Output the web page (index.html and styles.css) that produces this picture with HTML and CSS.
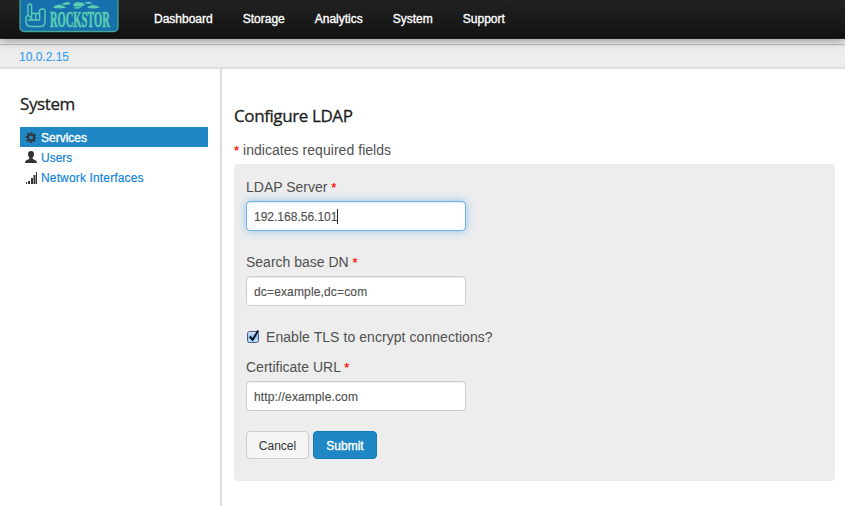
FILE: index.html
```html
<!DOCTYPE html>
<html lang="en">
<head>
<meta charset="utf-8">
<title>Configure LDAP</title>
<link rel="stylesheet" href="styles.css">
</head>
<body>
<header class="navbar">
  <svg class="logo" width="100" height="38" viewBox="0 0 100 38">
    <rect x="1" y="-3.5" width="98" height="35" rx="4" fill="#1770ab" stroke="#45a596" stroke-width="1.3"/>
    <g fill="none" stroke="#5bcdb4" stroke-width="1.400" stroke-linejoin="round" stroke-linecap="round">
      <path d="M9 15.500V6q0-2 1.800-2t1.800 2V14M12.600 20v-5q0-1.800 2-1.800t2 1.800v5h-3.500M16.600 15q0-1.800 2-1.800t2 1.800v5h-3.500M20.600 15V11q0-2 2.700-2t2.700 2v11q0 4.500-5 4.500h-9Q7 26.500 7 22v-4q0-3 3-2l4 4H9.500"/>
    </g>
    <g fill="#5bcdb4">
      <path d="M34 7l4-2 3-.5 4 1.500 2 1.500-5 1-7-.5zM43 3.500l5-1.500 4 1-2 1.500-5 .5zM54 4l4-2 6 .8 2 2-4 2-7-.5zM53 8l5-1 5 .5-4 1.200zM65 2.500l5-.8 4 1.300-5 1zM68 7l5-2 4 .5 4 2-5 1-6-.2z"/>
    </g>
    <text class="logo-text" transform="translate(31 27) scale(.437 1)">ROCKSTOR</text>
  </svg>
  <nav class="menu"><a>Dashboard</a><a>Storage</a><a>Analytics</a><a>System</a><a>Support</a></nav>
</header>
<div class="hostbar"><a>10.0.2.15</a></div>
<div class="layout">
  <aside class="sidebar">
    <h4 class="title">System</h4>
    <ul class="side-nav">
      <li class="active">
        <svg width="14" height="14" viewBox="0 0 14 14"><g fill="none" stroke="#333"><circle cx="7" cy="7.500" r="3.100" stroke-width="2"/><circle cx="7" cy="7.500" r="4.700" stroke-width="1.600" stroke-dasharray="1.891 1.800" stroke-dashoffset=".94"/></g></svg>
        <a>Services</a></li>
      <li>
        <svg width="14" height="14" viewBox="0 0 14 14"><path fill="#333" d="M7 1c2 0 3 1.200 3 3 0 1.500-.5 2.700-1.300 3.500v1.300c.6.900 4.300 1.200 4.300 4.200H1c0-3 3.700-3.300 4.300-4.200V7.500C4.500 6.700 4 5.500 4 4c0-1.800 1-3 3-3z"/></svg>
        <a>Users</a></li>
      <li>
        <svg width="14" height="14" viewBox="0 0 14 14"><path fill="#333" d="M2 12h1v2H2zM4 11h2v3H4zM7 8h2v6H7zM9.500 5h2v9h-2zM12 2h1v12h-1z"/></svg>
        <a class="wide">Network Interfaces</a></li>
    </ul>
  </aside>
  <main class="content">
    <h4 class="title">Configure LDAP</h4>
    <p class="hint"><span class="required">*</span> indicates required fields</p>
    <form class="well">
      <label class="label">LDAP Server <span class="required">*</span></label>
      <div class="field focused">192.168.56.101<span class="caret"></span></div>
      <label class="label">Search base DN <span class="required">*</span></label>
      <div class="field wide">dc=example,dc=com</div>
      <div class="check">
        <svg width="14" height="16" viewBox="0 0 14 16"><defs><linearGradient id="box" x2="0" y2="1"><stop stop-color="#e2effa"/><stop offset=".45" stop-color="#94c3ee"/><stop offset="1" stop-color="#c3edfb"/></linearGradient></defs><rect x="1.500" y="2.500" width="11" height="11" rx="2" fill="url(#box)" stroke="#49548b"/><path d="M3.800 7.500l2.900 3.300L12.200 1.500" fill="none" stroke="#0b1020" stroke-width="2"/></svg>
        <span>Enable TLS to encrypt connections?</span>
      </div>
      <label class="label">Certificate URL <span class="required">*</span></label>
      <div class="field wide last">http://example.com</div>
      <div class="actions"><button type="button" class="btn">Cancel</button><button type="button" class="btn primary">Submit</button></div>
    </form>
  </main>
</div>
</body>
</html>
```
FILE: styles.css
```css
* { box-sizing: border-box; }
body {
  margin: 0;
  height: 506px;
  overflow: hidden;
  background: #fff;
  color: #505050;
  font: 14px/20px "Liberation Sans", sans-serif;
}
.navbar {
  position: relative;
  display: flex;
  height: 39px;
  padding-left: 19px;
  background: linear-gradient(#222, #111);
  border-bottom: 1px solid #201c1c;
  box-shadow: 0 1px 10px rgba(0, 0, 0, .45);
}
.logo { flex: none; overflow: visible; }
.logo-text {
  font: bold 24px "Liberation Serif", serif;
  fill: #5bcdb4;
  stroke: #5bcdb4;
  stroke-width: .7px;
}
.menu {
  display: flex;
  gap: 30px;
  margin-left: 35px;
  padding-top: 9px;
  color: #fff;
  font-size: 12px;
  -webkit-text-stroke: .35px #fff;
}
.hostbar {
  height: 30px;
  padding: 8px 19px 0;
  background: linear-gradient(transparent 5px, #c2c2c2 5px, #c2c2c2 6px, transparent 6px), #ededed;
  border-bottom: 2px solid #ddd;
  color: #33a0ed;
  font-size: 12px;
  -webkit-text-stroke: .15px #33a0ed;
}
.layout { display: flex; height: 437px; }
.sidebar {
  flex: none;
  width: 222px;
  padding: 25px 12px 0 20px;
  border-right: 2px solid #ddd;
}
.title {
  margin: 0;
  color: #222;
  font: 17px/20px "Open Sans", sans-serif;
  letter-spacing: -.4px;
  -webkit-text-stroke: .3px #222;
}
.side-nav {
  margin: 13px 0 0;
  padding: 0;
  list-style: none;
  color: #0b80dc;
  font-size: 12px;
  -webkit-text-stroke: .15px #0b80dc;
}
.side-nav li {
  display: flex;
  align-items: center;
  gap: 3px;
  height: 20px;
  padding-left: 4px;
}
.side-nav a { padding-top: 2px; }
.wide { letter-spacing: .15px; }
.side-nav .active {
  background: #1f87c3;
  color: #fff;
  -webkit-text-stroke: .35px #fff;
}
.content { flex: 1; padding: 37px 10px 0 12px; }
.hint { margin: 14px 0 4px; letter-spacing: .04px; }
.required {
  color: #f00;
  font-size: 13px;
  line-height: 1;
  -webkit-text-stroke: .2px #f00;
}
.well {
  height: 317px;
  padding: 13px 12px;
  background: #ededed;
  border-radius: 4px;
}
.label { display: block; height: 20px; margin-bottom: 4px; }
.field {
  display: flex;
  align-items: center;
  width: 220px;
  height: 30px;
  margin-bottom: 21px;
  padding: 1px 7px 0;
  background: #fff;
  border: 1px solid #ccc;
  border-radius: 4px;
  box-shadow: inset 0 1px 1px rgba(0, 0, 0, .075);
  color: #505050;
  font-size: 12px;
  -webkit-text-stroke: .15px #505050;
}
.focused {
  border-color: #6bb3ea;
  box-shadow: inset 0 1px 1px rgba(0, 0, 0, .075), 0 0 8px rgba(82, 168, 236, .6);
}
.caret { width: 1px; height: 15px; background: #222; }
.check {
  display: flex;
  align-items: center;
  gap: 6px;
  height: 20px;
  margin-bottom: 10px;
  letter-spacing: .06px;
}
.last { margin-bottom: 20px; }
.actions { display: flex; gap: 4px; }
.btn {
  width: 63px;
  height: 28px;
  padding: 1px 0 0;
  background: #f5f5f5;
  border: 1px solid #ccc;
  border-radius: 4px;
  color: #333;
  font: 12px "Liberation Sans", sans-serif;
}
.primary {
  width: 64px;
  background: #1f87c3;
  border-color: #1179b8;
  color: #fff;
  -webkit-text-stroke: .35px #fff;
}
```
